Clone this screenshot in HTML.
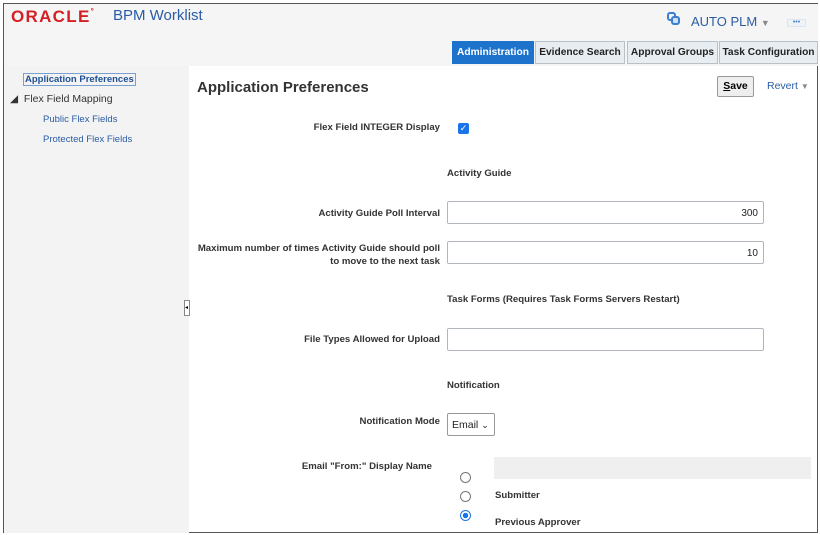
<!DOCTYPE html>
<html><head><style>
*{margin:0;padding:0;box-sizing:border-box}
body{width:820px;height:535px;background:#fff;font-family:"Liberation Sans",Arial,sans-serif;position:relative;overflow:hidden}
.a{position:absolute}
.lbl{position:absolute;font-size:9.6px;font-weight:bold;color:#333;text-align:right;white-space:nowrap}
.inp{position:absolute;border:1px solid #b0b6bb;border-radius:2px;background:#fff;font-size:10px;color:#222;text-align:right;padding:6px 5px 0 0}
.tab{position:absolute;top:41px;height:23px;font-size:10.2px;font-weight:bold;color:#222;background:#e8edf2;border:1px solid #b8c0c8;text-align:center;line-height:21px}
.rad{position:absolute;width:11px;height:11px;border:1px solid #777;border-radius:50%;background:#fff}
</style></head><body>
<div class="a" style="left:3px;top:3px;width:815px;height:530px;border:1px solid #555"></div>
<div class="a" style="left:4px;top:4px;width:814px;height:62px;background:#f5f5f5"></div>
<div class="a" style="left:4px;top:66px;width:185px;height:467px;background:#f3f3f3"></div>
<div class="a" style="left:11px;top:7px;font-size:17px;font-weight:bold;color:#d41f26;letter-spacing:1.3px">ORACLE<span style="font-size:8px;vertical-align:top">°</span></div>
<div class="a" style="left:113px;top:7px;font-size:15px;color:#2a5ca5">BPM Worklist</div>
<div class="a" style="left:667px;top:12px;width:9px;height:9px;border:2px solid #3b7fd0;border-radius:3px"></div>
<div class="a" style="left:671px;top:16px;width:9px;height:9px;border:2px solid #3b7fd0;border-radius:3px;background:#cfe0f5"></div>
<div class="a" style="left:691px;top:14px;font-size:13px;color:#2a5ca5">AUTO PLM <span style="font-size:9px;color:#888">▼</span></div>
<div class="a" style="left:787px;top:19px;width:19px;height:8px;border:1px solid #dde6f0;background:#eef3f8;font-size:7px;line-height:5px;color:#4a7fc5;text-align:center">•••</div>
<div class="tab" style="left:452px;width:82px;background:#1d72cc;color:#fff;border-color:#1d72cc">Administration</div>
<div class="tab" style="left:535px;width:90px">Evidence Search</div>
<div class="tab" style="left:627px;width:91px">Approval Groups</div>
<div class="tab" style="left:719px;width:99px">Task Configuration</div>
<div class="a" style="left:23px;top:73px;font-size:9.5px;font-weight:bold;color:#1f4f95;border:1px solid #7aa0d0;padding:0 1px">Application Preferences</div>
<div class="a" style="left:10px;top:93px;font-size:10.5px;color:#333">◢&nbsp; Flex Field Mapping</div>
<div class="a" style="left:43px;top:114px;font-size:9.5px;color:#2a5ca5">Public Flex Fields</div>
<div class="a" style="left:43px;top:134px;font-size:9.5px;color:#2a5ca5">Protected Flex Fields</div>
<div class="a" style="left:184px;top:300px;width:6px;height:16px;border:1px solid #888;background:#fff;font-size:6px;line-height:14px">◂</div>
<div class="a" style="left:197px;top:79px;font-size:15px;font-weight:bold;color:#333">Application Preferences</div>
<div class="a" style="left:717px;top:76px;width:37px;height:21px;border:1px solid #999;background:#eee;font-size:10.5px;font-weight:bold;text-align:center;line-height:19px;border-radius:2px"><u>S</u>ave</div>
<div class="a" style="left:767px;top:80px;font-size:10.5px;color:#2a5ca5">Revert <span style="font-size:8px;color:#888">▼</span></div>
<div class="lbl" style="right:380px;top:122px">Flex Field INTEGER Display</div>
<div class="a" style="left:458px;top:123px;width:11px;height:11px;background:#1a73e8;border-radius:2px;color:#fff;font-size:9px;line-height:11px;text-align:center">✓</div>
<div class="lbl" style="left:447px;top:168px">Activity Guide</div>
<div class="lbl" style="right:380px;top:208px">Activity Guide Poll Interval</div>
<div class="inp" style="left:447px;top:201px;width:317px;height:23px">300</div>
<div class="lbl" style="right:380px;top:242px;line-height:13px">Maximum number of times Activity Guide should poll<br>to move to the next task</div>
<div class="inp" style="left:447px;top:241px;width:317px;height:23px">10</div>
<div class="lbl" style="left:447px;top:294px">Task Forms (Requires Task Forms Servers Restart)</div>
<div class="lbl" style="right:380px;top:334px">File Types Allowed for Upload</div>
<div class="inp" style="left:447px;top:328px;width:317px;height:23px"></div>
<div class="lbl" style="left:447px;top:380px">Notification</div>
<div class="lbl" style="right:380px;top:416px">Notification Mode</div>
<div class="a" style="left:447px;top:413px;width:48px;height:23px;border:1px solid #999;border-radius:2px;font-size:10.5px;padding:5px 0 0 4px;color:#222">Email <span style="font-size:9px">⌄</span></div>
<div class="lbl" style="right:388px;top:461px">Email "From:" Display Name</div>
<div class="a" style="left:494px;top:457px;width:317px;height:22px;background:#efefef"></div>
<div class="rad" style="left:460px;top:472px"></div>
<div class="rad" style="left:460px;top:491px"></div>
<div class="rad" style="left:460px;top:510px;border-color:#1a73e8;background:radial-gradient(#1a73e8 40%,#fff 45%)"></div>
<div class="lbl" style="left:495px;top:490px">Submitter</div>
<div class="lbl" style="left:495px;top:517px">Previous Approver</div>
</body></html>
